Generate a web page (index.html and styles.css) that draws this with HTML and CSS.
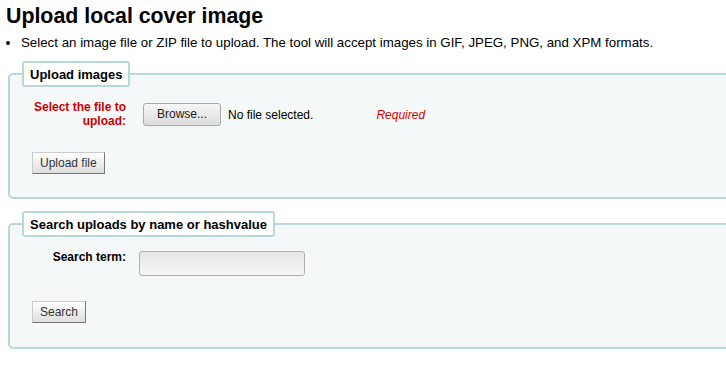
FILE: index.html
```html
<!DOCTYPE html>
<html lang="en">
<head>
    <meta charset="UTF-8">
    <title>Upload local cover image</title>
    <link rel="stylesheet" href="styles.css">
</head>

<body>
    <h1>Upload local cover image</h1>

    <ul class="hint">
        <li>Select an image file or ZIP file to upload. The tool will accept images in GIF, JPEG, PNG, and XPM formats.</li>
    </ul>

    <fieldset class="rows">
        <legend>Upload images</legend>
        <div class="row">
            <label class="required" for="fileToUpload">Select the file to upload:</label>
            <div class="file-input" id="fileToUpload">
                <span class="browse">Browse...</span>
                <span class="file-name">No file selected.</span>
            </div>
            <span class="required-note">Required</span>
        </div>
        <div class="actions">
            <button class="btn">Upload file</button>
        </div>
    </fieldset>

    <fieldset class="rows search-box">
        <legend>Search uploads by name or hashvalue</legend>
        <div class="row">
            <label for="term">Search term:</label>
            <input type="text" id="term" class="search-input">
        </div>
        <div class="actions">
            <button class="btn">Search</button>
        </div>
    </fieldset>
</body>
</html>
```

FILE: styles.css
```css
html, body {
    overflow: hidden;
}

body {
    font-family: 'Liberation Sans', Arial, sans-serif;
    font-size: 13px;
    color: #000;
    background: #fff;
    margin: 0;
    padding: 0 0 0 8px;
}

h1 {
    font-size: 21.33px;
    font-weight: bold;
    margin: 4px 0 0 -2px;
    line-height: 24px;
}

.hint {
    margin: 7px 0 0;
    padding-left: 13px;
    line-height: 15px;
    font-size: 13.3px;
}

fieldset.rows {
    border: 2px solid #b9d8d9;
    border-radius: 5px;
    background: #f4f8f9;
    margin: 11px -30px 0 0;
    padding: 0 0 23px 16px;
}

fieldset.search-box {
    margin-top: 12px;
    padding-bottom: 24px;
}

fieldset.rows legend {
    background: #fff;
    border: 2px solid #b9d8d9;
    border-radius: 3px;
    font-weight: bold;
    padding: 4px 6px 3px;
    margin-left: -4px;
    line-height: 15px;
}

.row {
    display: flex;
    align-items: flex-start;
    margin-top: 13px;
    font-size: 12px;
}

.row label {
    width: 100px;
    text-align: right;
    font-weight: bold;
    line-height: 14px;
    margin-right: 13px;
}

label.required {
    color: #cc0000;
}

.file-input {
    display: flex;
    align-items: center;
    margin: 3px 0 0 4px;
}

.browse {
    display: inline-block;
    width: 76px;
    height: 21px;
    line-height: 21px;
    text-align: center;
    color: #222;
    border: 1px solid #a9a9a9;
    border-radius: 3px;
    background: linear-gradient(#f7f7f7, #dcdcdc);
}

.file-name {
    margin-left: 7px;
}

.required-note {
    color: #dd0000;
    font-style: italic;
    margin: 8px 0 0 63px;
}

.search-input {
    width: 166px;
    height: 25px;
    box-sizing: border-box;
    border: 1px solid #b0b0b0;
    border-radius: 3px;
    background: linear-gradient(#e6e6e6, #f6f6f6);
    margin: 1px 0 0;
}

.actions {
    margin-top: 24px;
    padding-left: 6px;
}

.search-box .actions {
    margin-top: 25px;
}

.btn {
    font-family: 'Liberation Sans', Arial, sans-serif;
    font-size: 12px;
    color: #333;
    padding: 0 7px;
    height: 22px;
    border: 1px solid #ccc;
    border-right-color: #777;
    border-bottom-color: #777;
    border-radius: 0;
    background: linear-gradient(#ffffff, #dedede);
    margin: 0;
}
```
